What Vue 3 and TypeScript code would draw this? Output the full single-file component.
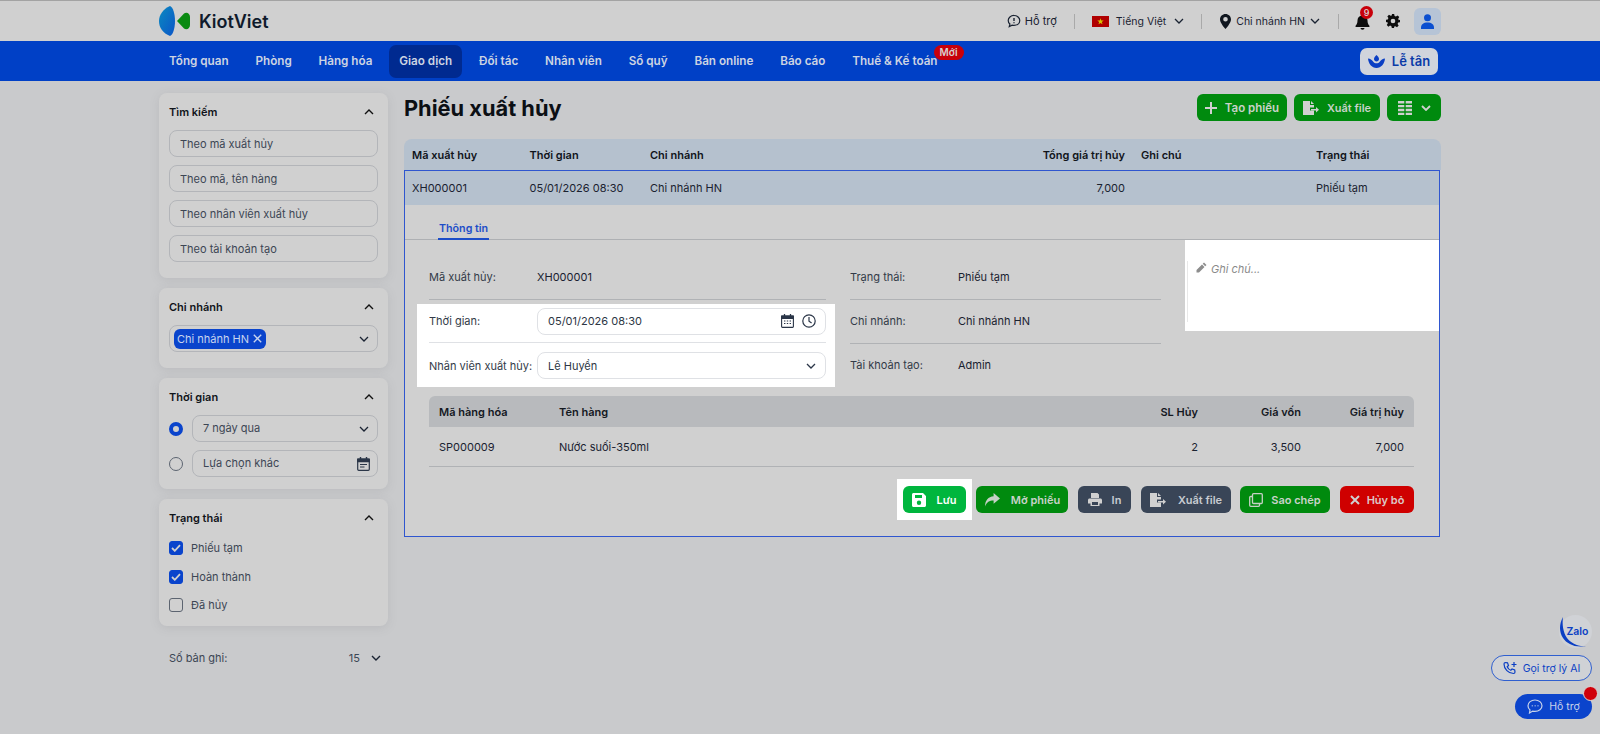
<script setup lang="ts">
interface NavItem { label: string; active?: boolean; badge?: string }
const nav: NavItem[] = [
  { label: 'Tổng quan' }, { label: 'Phòng' }, { label: 'Hàng hóa' }, { label: 'Giao dịch', active: true },
  { label: 'Đối tác' }, { label: 'Nhân viên' }, { label: 'Sổ quỹ' }, { label: 'Bán online' },
  { label: 'Báo cáo' }, { label: 'Thuế & Kế toán', badge: 'Mới' },
]
const searches: string[] = ['Theo mã xuất hủy', 'Theo mã, tên hàng', 'Theo nhân viên xuất hủy', 'Theo tài khoản tạo']
const statuses = [
  { label: 'Phiếu tạm', checked: true },
  { label: 'Hoàn thành', checked: true },
  { label: 'Đã hủy', checked: false },
]
</script>

<template>
  <div class="page">
    <header class="topbar">
      <div class="wrap top-inner">
        <div class="logo">
          <svg width="32" height="31" viewBox="0 0 32 31">
            <defs>
              <linearGradient id="lg" x1="0" y1="0" x2="1" y2="1">
                <stop offset="0" stop-color="#0a8ac0" />
                <stop offset="1" stop-color="#0b55c8" />
              </linearGradient>
            </defs>
            <path d="M11 0C4 3 0 9 0 15c0 7 4 12 11 15 3-1 5-8 5-15S14 1 11 0Z" fill="url(#lg)" />
            <path d="M18 15l7-7.500C28 5.500 31 8 31 11v8c0 3-3 5.500-6 3.500Z" fill="#0a8a12" />
          </svg>
          <span class="logo-text">KiotViet</span>
        </div>
        <div class="top-right">
          <span class="top-item help">
            <svg width="14" height="14" viewBox="0 0 16 16" fill="none" stroke="#1a2332" stroke-width="1.4">
              <path d="M8 1.700c3.700 0 6.600 2.500 6.600 5.700S11.700 13 8 13c-.8 0-1.500-.1-2.200-.3L2.600 14.300l.7-2.800C2 10.500 1.400 9 1.400 7.400 1.400 4.200 4.300 1.700 8 1.700Z" />
              <path d="M8 4.500v3.500M8 9.500v1.200" stroke-width="1.600" />
            </svg>
            Hỗ trợ
          </span>
          <i class="vline l1"></i>
          <span class="top-item lang">
            <svg width="17" height="11" viewBox="0 0 17 11"><rect width="17" height="11" fill="#b00000" /><path d="M8.500 2.200l.8 2.300h2.400l-1.900 1.500.7 2.300-2-1.400-2 1.400.7-2.300-1.900-1.500h2.400z" fill="#d8c400" /></svg>
            <span>Tiếng Việt</span>
            <svg class="chev" width="10" height="6" viewBox="0 0 10 6" fill="none" stroke="#1a2332" stroke-width="1.300"><path d="M1 1l4 4 4-4" /></svg>
          </span>
          <i class="vline l2"></i>
          <span class="top-item branch">
            <svg width="11" height="15" viewBox="0 0 11 15"><path fill-rule="evenodd" d="M5.500 0C2.500 0 0 2.400 0 5.400 0 9 5.500 15 5.500 15S11 9 11 5.400C11 2.400 8.500 0 5.500 0Zm0 7.600a2.300 2.300 0 1 1 0-4.600 2.300 2.300 0 0 1 0 4.600Z" fill="#10161f" /></svg>
            <span>Chi nhánh HN</span>
            <svg class="chev" width="10" height="6" viewBox="0 0 10 6" fill="none" stroke="#1a2332" stroke-width="1.300"><path d="M1 1l4 4 4-4" /></svg>
          </span>
          <i class="vline l3"></i>
          <span class="bell">
            <svg width="15" height="17" viewBox="0 0 15 17"><path d="M7.500 1c-.6 0-1 .4-1 1v.6C4 3.100 2.500 5.100 2.500 7.500c0 2.700-.7 3.900-1.900 5.200-.4.500 0 1.300.6 1.300h12.600c.6 0 1-.8.6-1.300-1.200-1.300-1.900-2.500-1.900-5.200 0-2.400-1.500-4.400-4-4.900V2c0-.6-.4-1-1-1Z" fill="#0d0d0d" /><path d="M5.500 15h4a2 1.800 0 0 1-4 0Z" fill="#0d0d0d" /></svg>
            <b class="bell-badge">9</b>
          </span>
          <svg class="gear" width="14" height="14" viewBox="0 0 24 24"><path fill-rule="evenodd" d="M10 0h4l.7 3.300 2.300 1 2.900-1.800 2.800 2.800-1.800 2.900 1 2.300L24 10v4l-3.100.7-1 2.300 1.800 2.900-2.800 2.800-2.900-1.800-2.300 1L14 24h-4l-.7-3.100-2.300-1-2.900 1.800-2.800-2.800L3.100 16l-1-2.300L0 14v-4l3.100-.7 1-2.300L2.300 4.100l2.800-2.800L8 3.100l2.300-1zM12 8a4 4 0 1 0 0 8 4 4 0 0 0 0-8Z" fill="#0d0d0d" /></svg>
          <span class="avatar">
            <svg width="13" height="15" viewBox="0 0 13 15"><circle cx="6.500" cy="3.800" r="3.500" fill="#0b4fd0" /><path d="M0 15v-1.500C0 10.500 2.500 8.500 6.500 8.500S13 10.500 13 13.500V15Z" fill="#0b4fd0" /></svg>
          </span>
        </div>
      </div>
    </header>

    <nav class="navbar">
      <div class="wrap nav-inner">
        <ul class="menu">
          <li v-for="n in nav" :key="n.label" class="menu-item" :class="{ active: n.active }">
            {{ n.label }}
            <b v-if="n.badge" class="new-badge">{{ n.badge }}</b>
          </li>
        </ul>
        <button class="reception">
          <svg width="17" height="13" viewBox="0 0 17 13"><path d="M8.500 0C10 1.500 11 2.700 11 4.100 11 5.500 9.800 6.500 8.500 6.500S6 5.500 6 4.100C6 2.700 7 1.500 8.500 0Z" fill="#0b3fc4" /><path d="M0 3.500c2.200.2 4 1.300 5.300 3.300.8 1 1.900 1.500 3.200 1.500s2.400-.5 3.200-1.500C13 4.800 14.800 3.700 17 3.500c-.3 5-3.800 9.500-8.500 9.500S.3 8.500 0 3.500Z" fill="#0b3fc4" /></svg>
          Lễ tân
        </button>
      </div>
    </nav>

    <main class="wrap content">
      <aside class="side">
        <section class="card c-search">
          <div class="card-title">Tìm kiếm <svg class="up" width="10" height="6" viewBox="0 0 10 6" fill="none" stroke="#111" stroke-width="1.400"><path d="M1 5l4-4 4 4" /></svg></div>
          <div class="stack">
            <div v-for="s in searches" :key="s" class="field">{{ s }}</div>
          </div>
        </section>
        <section class="card c-branch">
          <div class="card-title">Chi nhánh <svg class="up" width="10" height="6" viewBox="0 0 10 6" fill="none" stroke="#111" stroke-width="1.400"><path d="M1 5l4-4 4 4" /></svg></div>
          <div class="field tagfield">
            <span class="tag">Chi nhánh HN
              <svg width="9" height="9" viewBox="0 0 8 8" fill="none" stroke="#c7d4ee" stroke-width="1.200"><path d="M.7.700l6.600 6.600M7.300.700L.7 7.300" /></svg>
            </span>
            <svg class="down" width="10" height="6" viewBox="0 0 10 6" fill="none" stroke="#1a2332" stroke-width="1.300"><path d="M1 1l4 4 4-4" /></svg>
          </div>
        </section>
        <section class="card c-time">
          <div class="card-title">Thời gian <svg class="up" width="10" height="6" viewBox="0 0 10 6" fill="none" stroke="#111" stroke-width="1.400"><path d="M1 5l4-4 4 4" /></svg></div>
          <div class="stack">
            <div class="radio-row">
              <span class="radio on"></span>
              <div class="field grow">7 ngày qua
                <svg class="down" width="10" height="6" viewBox="0 0 10 6" fill="none" stroke="#1a2332" stroke-width="1.300"><path d="M1 1l4 4 4-4" /></svg>
              </div>
            </div>
            <div class="radio-row">
              <span class="radio"></span>
              <div class="field grow">Lựa chọn khác
                <svg class="down cal" width="13" height="14" viewBox="0 0 13 14" fill="none" stroke="#2b3648" stroke-width="1.200"><rect x=".7" y="2" width="11.600" height="11.300" rx="1" /><path d="M.7 2h11.600v2.600H.7z" fill="#2b3648" /><path d="M3.500 0v2.500M9.500 0v2.500" stroke-width="1.400" /><path d="M3 7.500h7M3 10h4.500" /></svg>
              </div>
            </div>
          </div>
        </section>
        <section class="card c-status">
          <div class="card-title">Trạng thái <svg class="up" width="10" height="6" viewBox="0 0 10 6" fill="none" stroke="#111" stroke-width="1.400"><path d="M1 5l4-4 4 4" /></svg></div>
          <div class="checks">
            <label v-for="s in statuses" :key="s.label" class="check-row">
              <span class="box" :class="{ on: s.checked }">
                <svg v-if="s.checked" width="10" height="8" viewBox="0 0 10 8" fill="none" stroke="#d0d0d0" stroke-width="1.800"><path d="M1 4l2.800 2.800L9 1.200" /></svg>
              </span>
              {{ s.label }}
            </label>
          </div>
        </section>
        <div class="records">
          <span>Số bản ghi:</span>
          <span class="rec-val">15
            <svg width="10" height="6" viewBox="0 0 10 6" fill="none" stroke="#1a2332" stroke-width="1.400"><path d="M1 1l4 4 4-4" /></svg>
          </span>
        </div>
      </aside>

      <section class="main">
        <div class="head">
          <h1>Phiếu xuất hủy</h1>
          <div class="head-actions">
            <button class="btn green w-create">
              <svg width="12" height="12" viewBox="0 0 12 12" fill="none" stroke="#d0d0d0" stroke-width="2"><path d="M6 0v12M0 6h12" /></svg>
              Tạo phiếu
            </button>
            <button class="btn green w-export">
              <svg width="16" height="14" viewBox="0 0 16 14"><path d="M0 0h7v4h4v2.500H7v3h4V14H0Z" fill="#d0d0d0" /><path d="M8 0l3 3H8Z" fill="#d0d0d0" /><path d="M8 8h5V6l3 2.800-3 2.700V9.500H8Z" fill="#d0d0d0" /></svg>
              Xuất file
            </button>
            <button class="btn green w-grid">
              <svg width="14" height="14" viewBox="0 0 14 14" fill="#d0d0d0"><path d="M0 0h6.300v2.400H0zM7.700 0H14v2.400H7.700zM0 3.900h6.300v2.400H0zM7.700 3.900H14v2.400H7.700zM0 7.800h6.300v2.400H0zM7.700 7.800H14v2.400H7.700zM0 11.700h6.300V14H0zM7.700 11.700H14V14H7.700z" /></svg>
              <svg width="10" height="6" viewBox="0 0 10 6" fill="none" stroke="#d0d0d0" stroke-width="1.800"><path d="M1 1l4 4 4-4" /></svg>
            </button>
          </div>
        </div>

        <div class="table">
          <div class="t-row t-head">
            <span class="col-a">Mã xuất hủy</span>
            <span class="col-b">Thời gian</span>
            <span class="col-c">Chi nhánh</span>
            <span class="col-d">Tổng giá trị hủy</span>
            <span class="col-e">Ghi chú</span>
            <span class="col-f">Trạng thái</span>
          </div>
          <div class="expanded">
            <div class="t-row t-sel">
              <span class="col-a">XH000001</span>
              <span class="col-b">05/01/2026 08:30</span>
              <span class="col-c">Chi nhánh HN</span>
              <span class="col-d">7,000</span>
              <span class="col-e"></span>
              <span class="col-f">Phiếu tạm</span>
            </div>
            <div class="tabs"><span class="tab">Thông tin</span></div>

            <div class="detail">
              <div class="d-col d-left">
                <div class="d-row first"><span class="lbl">Mã xuất hủy:</span><span>XH000001</span></div>
                <div class="spot">
                  <div class="d-row editable">
                    <span class="lbl">Thời gian:</span>
                    <div class="white-field">05/01/2026 08:30
                      <span class="wf-icons">
                        <svg width="13" height="14" viewBox="0 0 13 14" fill="none" stroke="#2b3648" stroke-width="1.100"><rect x=".6" y="2" width="11.800" height="11.400" rx=".8" /><path d="M.6 2h11.800v2.400H.6z" fill="#2b3648" /><path d="M3.500 0v2.500M9.500 0v2.500" stroke-width="1.300" /><path d="M3 7h1.400M5.800 7h1.400M8.600 7H10M3 9.500h1.400M5.800 9.500h1.400M8.600 9.500H10" stroke-width="1.200" /></svg>
                        <svg width="14" height="14" viewBox="0 0 14 14" fill="none" stroke="#2b3648" stroke-width="1.200"><circle cx="7" cy="7" r="6.200" /><path d="M7 3v4.200l2.600 1.900" /></svg>
                      </span>
                    </div>
                  </div>
                  <div class="d-row editable last">
                    <span class="lbl">Nhân viên xuất hủy:</span>
                    <div class="white-field">Lê Huyền
                      <span class="wf-icons"><svg width="10" height="6" viewBox="0 0 10 6" fill="none" stroke="#2b3648" stroke-width="1.300"><path d="M1 1l4 4 4-4" /></svg></span>
                    </div>
                  </div>
                </div>
              </div>

              <div class="d-col d-right">
                <div class="d-row first"><span class="lbl">Trạng thái:</span><span>Phiếu tạm</span></div>
                <div class="d-row plain"><span class="lbl">Chi nhánh:</span><span>Chi nhánh HN</span></div>
                <div class="d-row plain last"><span class="lbl">Tài khoản tạo:</span><span>Admin</span></div>
              </div>

              <div class="note">
                <div class="note-inner">
                  <svg width="11" height="11" viewBox="0 0 11 11"><path d="M8 .5l2.500 2.500-1.300 1.300-2.500-2.500zM6 2.600l2.500 2.500L3 10.500H.5V8z" fill="#8d8d8d" /></svg>
                  <em>Ghi chú...</em>
                </div>
              </div>
            </div>

            <div class="items">
              <div class="i-row i-head">
                <span class="i-a">Mã hàng hóa</span><span class="i-b">Tên hàng</span>
                <span class="i-c">SL Hủy</span><span class="i-d">Giá vốn</span><span class="i-e">Giá trị hủy</span>
              </div>
              <div class="i-row i-body">
                <span class="i-a">SP000009</span><span class="i-b">Nước suối-350ml</span>
                <span class="i-c">2</span><span class="i-d">3,500</span><span class="i-e">7,000</span>
              </div>
            </div>

            <div class="actions">
              <div class="spot-btn">
                <button class="btn save">
                  <svg width="14" height="14" viewBox="0 0 14 14"><path fill-rule="evenodd" d="M1.500 0H11l3 3v9.500c0 .8-.7 1.500-1.500 1.500h-11C.7 14 0 13.300 0 12.500v-11C0 .7.700 0 1.500 0ZM3 2v3h7V2Zm4 5.500a2.200 2.200 0 1 0 0 4.400 2.200 2.200 0 0 0 0-4.400Z" fill="#fff" /></svg>
                  Lưu
                </button>
              </div>
              <button class="btn green a-open">
                <svg width="16" height="14" viewBox="0 0 15 13"><path d="M9 0l6 5-6 5V7C5 7 2.500 8.500 1 12.500 1 7 4 3.300 9 3Z" fill="#c5d0c5" /></svg>
                Mở phiếu
              </button>
              <button class="btn dark a-print">
                <svg width="14" height="13" viewBox="0 0 14 13"><path fill-rule="evenodd" d="M3 0h6.500L11 1.500V5H3Zm-1.500 5.500h11c.8 0 1.500.7 1.500 1.500v3.500h-2.500V13h-9v-2.500H0V7c0-.8.7-1.500 1.500-1.500ZM4 9v3h6V9Z" fill="#d0d0d0" /></svg>
                In
              </button>
              <button class="btn dark a-export">
                <svg width="16" height="14" viewBox="0 0 16 14"><path d="M0 0h7v4h4v2.500H7v3h4V14H0Z" fill="#d0d0d0" /><path d="M8 0l3 3H8Z" fill="#d0d0d0" /><path d="M8 8h5V6l3 2.800-3 2.700V9.500H8Z" fill="#d0d0d0" /></svg>
                Xuất file
              </button>
              <button class="btn green a-copy">
                <svg width="14" height="14" viewBox="0 0 14 14" fill="none" stroke="#c5d0c5" stroke-width="1.300"><rect x="3.500" y=".7" width="9.800" height="9.800" rx="1" /><path d="M3 3.500H1.700C1.100 3.500.7 3.900.7 4.500v7.800c0 .6.4 1 1 1h7.800c.6 0 1-.4 1-1V11" /></svg>
                Sao chép
              </button>
              <button class="btn red a-cancel">
                <svg width="10" height="10" viewBox="0 0 10 10" fill="none" stroke="#d0d0d0" stroke-width="2"><path d="M1 1l8 8M9 1l-8 8" /></svg>
                Hủy bỏ
              </button>
            </div>
          </div>
        </div>
      </section>
    </main>

    <div class="zalo">
      <svg class="zalo-arc" width="33" height="33" viewBox="0 0 33 33" fill="none"><path d="M4 2C0 9 0 17 4 23c4 6 12 10 23 8-8 1-15-3-19-8C4 17 3 9 4 2Z" fill="#0b3fc4" /></svg>
      <span>Zalo</span>
    </div>
    <button class="ai-btn">
      <svg width="15" height="15" viewBox="0 0 15 15" fill="none" stroke="#0b3fc4" stroke-width="1.200"><path d="M2.500 1.500l2 .3 1 2.700-1.300 1.200c.7 1.700 2 3 3.600 3.600l1.200-1.300 2.700 1 .3 2c0 .8-.7 1.500-1.500 1.500C5.500 12.500 1 8 1 3c0-.8.700-1.500 1.500-1.500Z" /><path d="M11 1v5M8.500 3.500h5" /></svg>
      Gọi trợ lý AI
    </button>
    <button class="support-btn">
      <svg width="16" height="15" viewBox="0 0 16 15" fill="none" stroke="#c8d3ea" stroke-width="1.200"><path d="M8 1c3.900 0 7 2.500 7 5.700S11.900 12.400 8 12.400c-.8 0-1.600-.1-2.300-.3L2.500 14l.5-3C1.700 10 1 8.400 1 6.700 1 3.500 4.100 1 8 1Z" /><path d="M4.800 6.800h.8M7.700 6.800h.8M10.600 6.800h.8" stroke-width="1.500" /></svg>
      Hỗ trợ
      <i class="dot"></i>
    </button>
  </div>
</template>

<style>
html, body { margin: 0; background: #c9cacc; }
</style>

<style scoped>
* { box-sizing: border-box; }
.page {
  position: relative; width: 1600px; height: 734px; overflow: hidden;
  background: #c9cacc; color: #14181f;
  font-family: Inter, "Noto Sans", sans-serif; font-size: 11px;
}
.wrap { width: 1282px; margin: 0 auto; }
button { font-family: inherit; border: 0; }
ul { list-style: none; margin: 0; padding: 0; }

/* top bar */
.topbar { height: 41px; background: #d0d0d0; border-top: 1px solid #a3a3a3; }
.top-inner { display: flex; align-items: center; justify-content: space-between; height: 40px; }
.logo { display: flex; align-items: center; gap: 8px; padding-top: 1px; }
.logo-text { font-size: 18px; font-weight: 600; color: #0f1a2b; }
.top-right { display: flex; align-items: center; height: 100%; }
.top-item { display: inline-flex; align-items: center; gap: 6px; font-size: 10.500px; color: #1a2230; }
.help { gap: 4px; font-size: 11px; }
.vline { display: block; width: 1px; height: 15px; background: #a9a9a9; }
.l1 { margin: 0 17px; }
.lang { gap: 7px; }
.lang .chev { margin-left: 1px; }
.l2 { margin: 0 18px 0 17px; }
.branch { gap: 5px; }
.l3 { margin: 0 16px 0 18px; }
.bell { position: relative; display: flex; width: 15px; margin-right: 16px; }
.bell-badge {
  position: absolute; left: 5px; top: -7px; width: 13px; height: 13px; border-radius: 50%;
  background: #c8000a; color: #d8d8d8; font-size: 9px; font-weight: 500;
  display: flex; align-items: center; justify-content: center;
}
.gear { margin-right: 14px; margin-left: 0; }
.avatar {
  width: 27px; height: 27px; border-radius: 6px; background: #b6c4d6;
  display: flex; align-items: center; justify-content: center;
}

/* nav */
.navbar { height: 40px; background: #0040c6; }
.nav-inner { display: flex; align-items: center; justify-content: space-between; height: 100%; }
.menu { display: flex; gap: 6.800px; }
.menu-item {
  position: relative; height: 33px; padding: 0 10px; border-radius: 7px;
  display: flex; align-items: center; color: #cdd4e2; font-size: 11.700px; font-weight: 600; white-space: nowrap;
}
.menu-item.active { background: #002a90; }
.new-badge {
  position: absolute; right: -16px; top: 0; height: 15px; padding: 0 6px; border-radius: 8px;
  background: #c8000a; color: #d8d0d0; font-size: 10px; font-weight: 600; display: flex; align-items: center;
}
.reception {
  width: 78px; height: 27px; border-radius: 7px; background: #d0d4dc; color: #0a3aa8; margin-right: 3px;
  display: flex; align-items: center; justify-content: center; gap: 7px; font-size: 13px; font-weight: 600;
}

/* layout */
.content { display: flex; gap: 16px; padding-top: 12px; }
.side { width: 229px; flex: none; display: flex; flex-direction: column; gap: 10px; }
.main { width: 1037px; flex: none; }

/* sidebar */
.card { background: #d0d0d0; border-radius: 8px; padding: 10px 10px 16px; box-shadow: 0 2px 10px rgba(120,124,130,.18); }
.card-title {
  display: flex; align-items: center; justify-content: space-between; height: 17px; margin-bottom: 10px;
  font-size: 11px; font-weight: 600; color: #10141a;
}
.up { margin-right: 4px; }
.stack { display: flex; flex-direction: column; gap: 8px; }
.field {
  position: relative; display: flex; align-items: center; height: 27px; padding: 0 10px; border: 1px solid #b3b5b9; border-radius: 8px;
  color: #3c4654; font-size: 11px;
}
.tagfield { padding-left: 4px; }
.tag {
  display: inline-flex; align-items: center; gap: 4px; height: 20px; padding: 0 4px 0 3px; border-radius: 6px;
  background: #0a44cc; color: #c7d4ee; font-size: 11px;
}
.down { position: absolute; right: 8px; top: 10px; }
.cal { right: 7px; top: 6px; }
.c-time { padding-bottom: 12px; }
.radio-row { display: flex; align-items: center; gap: 9px; }
.radio { width: 14px; height: 14px; flex: none; border-radius: 50%; border: 1px solid #5c6470; }
.radio.on { border: 4px solid #0a44cc; background: #d0d0d0; }
.grow { flex: 1; padding-bottom: 1px; }
.c-status { padding-bottom: 14px; }
.checks { display: flex; flex-direction: column; gap: 14.500px; padding-top: 14px; margin-top: -9px; }
.check-row { display: flex; align-items: center; gap: 8px; height: 14px; color: #3c4654; font-size: 11px; }
.box {
  width: 14px; height: 14px; border-radius: 3px; border: 1px solid #5c6470;
  display: flex; align-items: center; justify-content: center;
}
.box.on { background: #0a44cc; border-color: #0a44cc; }
.records {
  display: flex; align-items: center; justify-content: space-between; height: 18px; padding: 0 7px 0 10px;
  margin-top: 13px; color: #3c4654; font-size: 11px;
}
.rec-val { display: flex; align-items: center; gap: 11px; }

/* head */
.head { display: flex; align-items: center; justify-content: space-between; height: 27px; margin-top: 1px; }
h1 { margin: 0; font-size: 21.800px; font-weight: 700; color: #0c0f14; }
.head-actions { display: flex; gap: 7px; }
.btn {
  display: inline-flex; align-items: center; justify-content: center; height: 27px; border-radius: 6px;
  color: #c9d2c9; font-size: 11px; font-weight: 600; white-space: nowrap;
}
.green { background: #008a0e; }
.dark { background: #394557; color: #c8ccd2; }
.red { background: #cf0000; color: #dcc8c8; }
.w-create { width: 90px; gap: 8px; font-size: 11.500px; }
.w-export { width: 86px; gap: 8px; }
.w-grid { width: 54px; gap: 9px; }

/* table */
.table { margin-top: 18px; }
.t-row { display: flex; align-items: center; }
.t-row > span { flex: none; }
.t-head { height: 31px; background: #b5c1ce; border-radius: 8px 8px 0 0; font-weight: 600; color: #10141a; }
.col-a { width: 125.500px; padding-left: 8px; }
.col-b { width: 120.500px; }
.col-c { width: 200px; }
.col-d { width: 275px; text-align: right; }
.col-e { width: 191px; padding-left: 16px; }
.col-f { width: 120px; }
.expanded {
  height: 367px; border: 1px solid #2f56cf; background: #d0d0d0; display: flex; flex-direction: column;
  margin-right: 1px;
}
.t-sel { height: 34px; background: #b5c1ce; color: #1a2230; flex: none; }
.t-sel .col-a { width: 124.500px; padding-left: 7px; }
.tabs { height: 35px; border-bottom: 1px solid #aeb0b3; padding-left: 33px; display: flex; align-items: flex-end; flex: none; }
.tab { height: 30px; padding: 8px 1px 0; display: flex; align-items: center; color: #1c4dc8; font-size: 10.700px; font-weight: 600; border-bottom: 2px solid #1c4dc8; margin-bottom: -1px; }

/* detail */
.detail { display: flex; padding-left: 24px; height: 156px; flex: none; }
.d-col { display: flex; flex-direction: column; }
.d-left { width: 397px; }
.d-right { width: 311px; margin-left: 24px; }
.d-row { display: flex; align-items: center; color: #1a2230; }
.lbl { width: 108px; flex: none; color: #333b48; white-space: nowrap; }
.first { height: 60px; padding-top: 14px; border-bottom: 1px solid #b0b2b5; flex: none; }
.spot { background: #fff; margin: 4px -9px 0 -12px; padding: 0 9px 0 12px; height: 83px; flex: none; }
.editable { height: 39px; padding-bottom: 4px; border-bottom: 1px solid #dfe1e5; }
.editable.last { border-bottom: 0; height: 44px; padding: 9px 0 8px; }
.white-field {
  flex: 1; display: flex; align-items: center; justify-content: space-between; height: 27px; padding: 0 9px 0 10px;
  background: #fff; border: 1px solid #dfe1e5; border-radius: 8px; color: #2d3644;
}
.wf-icons { display: flex; align-items: center; gap: 8px; }
.plain { height: 44px; padding-bottom: 2px; border-bottom: 1px solid #b0b2b5; flex: none; }
.plain.last { border-bottom: 0; padding-bottom: 3px; }
.note { width: 254px; height: 91px; margin-left: 24px; flex: none; background: #fff; padding: 21px 0 9px 2px; }
.note-inner { height: 61px; border-left: 1px solid #e8e8e8; padding: 2px 0 0 8px; display: flex; align-items: flex-start; gap: 4px; color: #8a8a8a; font-size: 11px; line-height: 13px; }
.note-inner svg { margin-top: -1px; }

/* items */
.items { margin: 0 25px 0 24px; }
.i-row { display: flex; align-items: center; }
.i-head { height: 31px; background: #b8babd; border-radius: 6px 6px 0 0; font-weight: 600; color: #14181f; }
.i-body { height: 40px; border-bottom: 1px solid #b0b2b5; color: #1a2230; }
.i-a { width: 130px; padding-left: 10px; }
.i-b { width: 388px; }
.i-c { width: 251px; text-align: right; }
.i-d { width: 103px; text-align: right; }
.i-e { width: 103px; text-align: right; }

/* actions */
.actions { display: flex; justify-content: flex-end; align-items: center; gap: 10px; margin: 12px 25px 0 0; }
.spot-btn { background: #fff; padding: 7px 6px; margin-right: -6px; display: flex; }
.save { width: 63px; background: #00b63e; color: #fff; gap: 10px; }
.a-open { width: 92px; gap: 11px; }
.a-print { width: 53px; gap: 10px; }
.a-export { width: 90px; gap: 12px; margin-right: -1px; }
.a-copy { width: 90px; gap: 8px; }
.a-cancel { width: 74px; gap: 7px; }

/* floating helpers */
.zalo {
  position: absolute; left: 1559px; top: 615px; width: 33px; height: 33px; border-radius: 50%; background: #d0d2d6;
  display: flex; align-items: center; justify-content: center; color: #0b3fc4; font-size: 10.500px; font-weight: 600;
}
.zalo span { position: relative; left: 2px; }
.zalo-arc { position: absolute; left: 0; top: 0; }
.ai-btn {
  position: absolute; left: 1491px; top: 655px; width: 101px; height: 26px; border-radius: 13px;
  border: 1px solid #2f5fcf; background: #d0d2d6; color: #0b3fc4; font-size: 10.500px;
  display: flex; align-items: center; justify-content: center; gap: 5px;
}
.support-btn {
  position: absolute; left: 1515px; top: 694px; width: 77px; height: 25px; border-radius: 13px;
  background: #0b44cc; color: #c8d3ea; font-size: 10.500px;
  display: flex; align-items: center; justify-content: center; gap: 6px;
}
.dot { position: absolute; left: 68px; top: -8px; width: 15px; height: 15px; border-radius: 50%; background: #d0000a; border: 1px solid #d8d8d8; }
</style>
